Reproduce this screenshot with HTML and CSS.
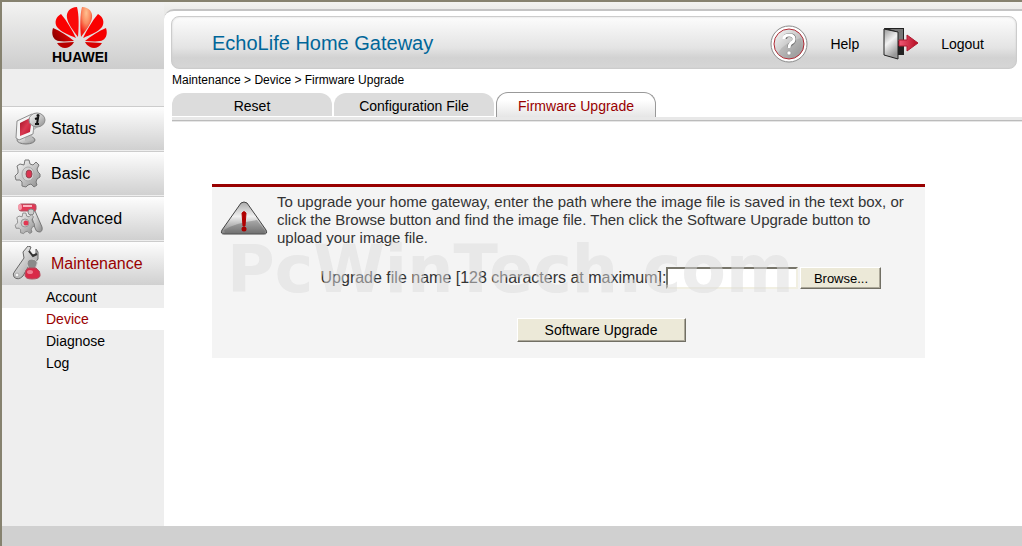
FILE: index.html
```html
<!DOCTYPE html>
<html lang="en">
<head>
    <meta charset="UTF-8">
    <meta name="viewport" content="width=device-width, initial-scale=1.0">
    <title>EchoLife Home Gateway</title>
    <link rel="stylesheet" href="styles.css">
</head>
<body>
    <div class="page">
        <aside class="sidebar">
            <div class="logo">
                <svg width="55" height="42" viewBox="0 0 55 42" aria-hidden="true">
                    <defs>
                        <radialGradient id="petal-light" cx="0.5" cy="0.2" r="0.7">
                            <stop offset="0" stop-color="#ffc090"/>
                            <stop offset="0.5" stop-color="#fb8a60"/>
                            <stop offset="1" stop-color="#f21a10"/>
                        </radialGradient>
                        <linearGradient id="petal-dark" x1="0" y1="1" x2="1" y2="0.6">
                            <stop offset="0" stop-color="#7c0000"/>
                            <stop offset="1" stop-color="#f00000"/>
                        </linearGradient>
                    </defs>
                    <path d="M26 30 C27 20 27 7 25 0 C18 0 14 5 15 11 C16 17 21 23 26 30Z" fill="#fa0a08"/>
                    <path d="M24 31 C20 23 15 14 9 7 C4 10 2 15 5 20 C9 25 17 28 24 31Z" fill="#fa0000"/>
                    <path d="M22 34 C16 29 8 24 1 21 C-1 27 1 33 7 34 C12 35 17 34 22 34Z" fill="url(#petal-dark)"/>
                    <path d="M22 35 L5 36 C8 41 13 42 17 40 C19 39 21 37 22 35Z" fill="#b80000"/>
                    <path d="M29 30 C28 20 28 7 30 0 C37 0 41 5 40 11 C39 17 34 23 29 30Z" fill="url(#petal-light)"/>
                    <path d="M31 31 C35 23 40 14 46 7 C51 10 53 15 50 20 C46 25 38 28 31 31Z" fill="#fa0000"/>
                    <path d="M33 34 C39 29 47 24 54 21 C56 27 54 33 48 34 C43 35 38 34 33 34Z" fill="#f60000"/>
                    <path d="M33 35 L50 36 C47 41 42 42 38 40 C36 39 34 37 33 35Z" fill="#d80000"/>
                </svg>
                <span class="logo-text">HUAWEI</span>
            </div>
            <nav class="nav">
                <a class="nav-item" href="#status">
                    <svg class="nav-icon" width="36" height="36" viewBox="0 0 36 36" aria-hidden="true">
                        <defs>
                            <linearGradient id="steel" x1="0" y1="0" x2="1" y2="1">
                                <stop offset="0" stop-color="#fbfbfb"/>
                                <stop offset="0.5" stop-color="#c9c9c9"/>
                                <stop offset="1" stop-color="#8b8b8b"/>
                            </linearGradient>
                            <linearGradient id="ruby" x1="0" y1="0" x2="1" y2="1">
                                <stop offset="0" stop-color="#a00c20"/>
                                <stop offset="0.5" stop-color="#d83850"/>
                                <stop offset="1" stop-color="#b80e28"/>
                            </linearGradient>
                        </defs>
                        <ellipse cx="14" cy="29" rx="9" ry="4" fill="url(#steel)" stroke="#777"/>
                        <path d="M13 24 L20 21 L20 29 L13 30Z" fill="#bbb"/>
                        <path d="M5 10 L20 3 L23 5 L21 23 L7 29 L4 27Z" fill="#f4f4f4" stroke="#8e8e8e"/>
                        <path d="M8 12 L20 6 L18 21 L8 25Z" fill="url(#ruby)"/>
                        <path d="M24 13 L21 20 L28 14Z" fill="#b5b5b5"/>
                        <ellipse cx="25" cy="9" rx="8" ry="7" fill="url(#steel)" stroke="#8c8c8c"/>
                        <path d="M23 8 L26 7 L25 13 M23 13 L27 13" fill="none" stroke="#111" stroke-width="2"/>
                        <circle cx="26" cy="4.500" r="1.500" fill="#111"/>
                    </svg>
                    Status
                </a>
                <a class="nav-item" href="#basic">
                    <svg class="nav-icon" width="36" height="36" viewBox="0 0 36 36" aria-hidden="true">
                        <path id="gear" d="M13 4 L17 4 L18 8 L21 9 L24 6 L27 9 L25 13 L26 16 L28 18 L28 21 L25 23 L24 26 L25 29 L22 31 L19 28 L16 29 L14 31 L10 30 L10 26 L8 24 L4 24 L3 20 L6 17 L6 14 L5 10 L8 8 L12 9Z" fill="url(#steel)" stroke="#777" stroke-linejoin="round"/>
                        <ellipse cx="16" cy="18" rx="6" ry="7" fill="#d2d2d2" stroke="#aaa"/>
                        <ellipse cx="17" cy="18" rx="3" ry="4" fill="#dc3450" stroke="#8f4650"/>
                    </svg>
                    Basic
                </a>
                <a class="nav-item" href="#advanced">
                    <svg class="nav-icon" width="36" height="36" viewBox="0 0 36 36" aria-hidden="true">
                        <path d="M18 10 L23 10 L30 26 Q31 31 27 31 Q24 31 23 27Z" fill="url(#steel)" stroke="#777"/>
                        <rect x="7" y="3" width="17" height="7" rx="2" fill="#e13855" stroke="#a95562"/>
                        <ellipse cx="8" cy="6" rx="2" ry="3" fill="#f69aaa"/>
                        <path d="M11 5 L20 5" stroke="#fbb4c0" stroke-width="2"/>
                        <circle cx="19" cy="11" r="3" fill="#ccc" stroke="#888"/>
                        <use href="#gear" transform="translate(1 9) scale(0.76)"/>
                        <circle cx="13" cy="22" r="4" fill="#ccc" stroke="#999"/>
                        <circle cx="14" cy="22" r="2.500" fill="#e23852"/>
                    </svg>
                    Advanced
                </a>
                <a class="nav-item nav-item-active" href="#maintenance">
                    <svg class="nav-icon" width="36" height="36" viewBox="0 0 36 36" aria-hidden="true">
                        <path d="M11 6 L16 0 L19 1 L17 6 L20 9 L24 8 L24 3 L26 6 L26 13 Q24 17 19 16 L11 30 Q6 35 2 31 Q0 28 3 25 L12 12Z" fill="url(#steel)" stroke="#666"/>
                        <path d="M17 5 L21 10 L25 8" fill="none" stroke="#333" stroke-width="2"/>
                        <circle cx="5" cy="29" r="2" fill="#f4f4f4" stroke="#aaa"/>
                        <path d="M15 18 Q15 13 20 13 Q26 14 25 18 L23 23 L17 23Z" fill="#8a8a8a" stroke="#ccc"/>
                        <path d="M16 22 L24 22 Q29 25 28 30 Q27 33 20 33 Q13 33 13 29 Q13 24 16 22Z" fill="#d92a48" stroke="#b05060"/>
                        <ellipse cx="18" cy="26" rx="3" ry="2" fill="#f07c90"/>
                    </svg>
                    Maintenance
                </a>
            </nav>
            <nav class="subnav">
                <a class="subnav-item" href="#account">Account</a>
                <a class="subnav-item subnav-item-active" href="#device">Device</a>
                <a class="subnav-item" href="#diagnose">Diagnose</a>
                <a class="subnav-item" href="#log">Log</a>
            </nav>
        </aside>

        <div class="main">
            <div class="content">
                <header class="header">
                    <h1 class="title">EchoLife Home Gateway</h1>
                    <a class="header-link" href="#help">
                        <svg width="38" height="38" viewBox="0 0 38 38" aria-hidden="true">
                            <circle cx="19" cy="19" r="18" fill="#fff" stroke="#8a8a8a"/>
                            <circle cx="19" cy="19" r="15" fill="url(#steel)" stroke="#b02a34"/>
                            <path d="M8 28 Q13 18 31 13 Q34 24 25 31 Q16 36 8 28Z" fill="#999" opacity="0.350"/>
                            <path d="M15 14 Q15 10 19 10 Q25 10 24 15 Q24 17 21 19 Q19 20 19 23" fill="none" stroke="#707070" stroke-width="4"/>
                            <path d="M14 14 Q14 10 19 10 Q24 10 24 14 Q24 17 21 18 Q19 20 19 23" fill="none" stroke="#fff" stroke-width="3"/>
                            <circle cx="19" cy="28" r="2" fill="#fff" stroke="#888" stroke-width="0.500"/>
                        </svg>
                        Help
                    </a>
                    <a class="header-link" href="#logout">
                        <svg width="36" height="34" viewBox="0 0 36 34" aria-hidden="true">
                            <defs>
                                <linearGradient id="arrow" x1="0" y1="0" x2="1" y2="0">
                                    <stop offset="0" stop-color="#f25a76"/>
                                    <stop offset="1" stop-color="#b30a20"/>
                                </linearGradient>
                                <linearGradient id="door" x1="0" y1="0" x2="0.4" y2="1">
                                    <stop offset="0" stop-color="#999"/>
                                    <stop offset="0.5" stop-color="#f2f2f2"/>
                                    <stop offset="1" stop-color="#999"/>
                                </linearGradient>
                            </defs>
                            <path d="M1 1 L21 1 L21 28 L10 28Z" fill="#222"/>
                            <path d="M6 2 L20 2 L20 14 L15 14 L15 5Z" fill="#777"/>
                            <path d="M1 2 L15 5 L15 32 L1 28Z" fill="url(#door)" stroke="#222"/>
                            <path d="M16 13 L24 13 L24 8 L35 16 L24 24 L24 19 L16 19Z" fill="url(#arrow)" stroke="#b01a30"/>
                        </svg>
                        Logout
                    </a>
                </header>
                <p class="breadcrumb">Maintenance &gt; Device &gt; Firmware Upgrade</p>
                <nav class="tabs">
                    <a class="tab" href="#reset">Reset</a>
                    <a class="tab" href="#config">Configuration File</a>
                    <a class="tab tab-active" href="#firmware">Firmware Upgrade</a>
                </nav>
                <form class="upgrade">
                    <svg class="warning" width="48" height="35" viewBox="0 0 48 35" aria-hidden="true">
                        <defs>
                            <linearGradient id="warn" x1="0" y1="0" x2="0" y2="1">
                                <stop offset="0" stop-color="#aaa"/>
                                <stop offset="0.450" stop-color="#f0f0f0"/>
                                <stop offset="1" stop-color="#7c7c7c"/>
                            </linearGradient>
                        </defs>
                        <path d="M21 2 Q24 0 27 2 L46 29 Q48 33 44 33 L4 33 Q0 33 2 29Z" fill="url(#warn)" stroke="#444"/>
                        <path d="M4 29 Q14 22 37 19 L45 30 Q46 32 43 32 L5 32Z" fill="#555" opacity="0.350"/>
                        <path d="M22 12 Q24 9 26 12 L25 25 L23 25Z" fill="#b00000" stroke="#b00000"/>
                        <circle cx="24" cy="28" r="2.500" fill="#a80000"/>
                    </svg>
                    <div class="upgrade-body">
                        <p class="upgrade-text">To upgrade your home gateway, enter the path where the image file is saved in the text box, or click the Browse button and find the image file. Then click the Software Upgrade button to upload your image file.</p>
                        <div class="file-row">
                            <label for="file-name">Upgrade file name [128 characters at maximum]:</label>
                            <input class="file-input" type="text" id="file-name" maxlength="128">
                            <button class="button browse-button" type="button">Browse...</button>
                        </div>
                        <button class="button upgrade-button" type="submit">Software Upgrade</button>
                    </div>
                    <span class="watermark">PcWinTech.com</span>
                </form>
            </div>
        </div>
    </div>
    <footer class="footer"></footer>
</body>
</html>
```
FILE: styles.css
```css
* {
    box-sizing: border-box;
}
body {
    font-family: "Liberation Sans", Arial, sans-serif;
    font-size: 14px;
    margin: 0;
    color: #000;
    background: #fff;
    border-top: 2px solid #86826f;
    border-left: 2px solid #86826f;
    display: flex;
    flex-direction: column;
    min-height: 100vh;
}
a {
    color: inherit;
    text-decoration: none;
}
.page {
    display: flex;
    flex: 1;
}
.sidebar {
    width: 162px;
    flex-shrink: 0;
    background: #eee;
}
.logo {
    height: 67px;
    padding: 5px 0 0 50px;
    display: flex;
    flex-direction: column;
    align-items: flex-start;
    background: linear-gradient(#f3f3f2, #cdcdcd);
}
.logo-text {
    font-size: 14px;
    font-weight: bold;
    line-height: 16px;
}
.nav {
    margin-top: 37px;
}
.nav-item {
    height: 45px;
    padding-left: 10px;
    display: flex;
    align-items: center;
    gap: 3px;
    font-size: 16px;
    border-top: 1px solid #ccc;
    border-bottom: 1px solid #eee;
    background: linear-gradient(#fdfdfd, #d0d0d0);
}
.nav-item-active {
    color: #990000;
}
.subnav-item {
    display: block;
    padding-left: 44px;
    line-height: 22px;
}
.subnav-item-active {
    color: #990000;
    background: #fff;
}
.main {
    flex: 1;
    padding-top: 7px;
    background: linear-gradient(#f3f3f0, #ebebe9 8px, #cdcdcd 67px, #eee 67px);
}
.content {
    height: 100%;
    padding: 5px 0 0 7px;
    background: #fff;
    border-top: 2px solid #c4c4c4;
    border-top-left-radius: 10px;
}
.header {
    height: 53px;
    margin-right: 5px;
    padding: 2px 32px 0 40px;
    display: flex;
    align-items: center;
    border: 1px solid #ccc;
    border-radius: 8px;
    box-shadow: inset 0 0 2px #ccc;
    background: linear-gradient(#fcfcfc, #e4e4e4 60%, #d2d2d2 80%, #d6d6d6);
}
.title {
    margin: 0 auto 0 0;
    font-size: 20px;
    font-weight: normal;
    color: #006699;
}
.header-link {
    display: flex;
    align-items: center;
    gap: 22px;
    margin-left: 24px;
}
.breadcrumb {
    margin: 4px 0 4px 1px;
    font-size: 12px;
    line-height: 15px;
}
.tabs {
    margin-left: 1px;
    display: flex;
    align-items: flex-end;
    gap: 2px;
    height: 30px;
    padding-bottom: 5px;
    background: linear-gradient(#e8e8e8, #e8e8e8 3px, #bbb 3px, #bbb 4px, #e6e6e6 4px) bottom / 100% 5px no-repeat;
}
.tab {
    width: 160px;
    height: 24px;
    line-height: 27px;
    text-align: center;
    background: #dcdcdc;
    border-bottom: 1px solid #fff;
    border-radius: 12px 12px 0 0;
}
.tab-active {
    height: 25px;
    color: #990000;
    border: 1px solid #999;
    border-bottom: 0;
    background: linear-gradient(#fff 30%, #e6e6e6);
}
.upgrade {
    position: relative;
    margin: 62px 97px 0 41px;
    padding: 6px 0 16px 8px;
    display: flex;
    gap: 9px;
    color: #333;
    background: #f4f4f4;
    border-top: 3px solid #990000;
}
.warning {
    flex-shrink: 0;
    margin-top: 8px;
}
.upgrade-body {
    flex: 1;
    display: flex;
    flex-direction: column;
    align-items: center;
    font-size: 16px;
}
.upgrade-text {
    margin: 0 0 20px;
    padding-right: 12px;
    font-size: 15px;
    line-height: 18px;
}
.file-row {
    display: flex;
    align-items: center;
    margin-bottom: 29px;
}
.file-input {
    width: 132px;
    height: 22px;
    padding: 0 2px;
    margin-right: 2px;
    font-family: inherit;
    font-size: 14px;
    background: #fff;
    border: 2px solid;
    border-color: #77756a #f1efe2 #f1efe2 #77756a;
}
.button {
    font-family: inherit;
    color: #000;
    background: #ece9d8;
    border: 1px solid;
    border-color: #fff #716f64 #716f64 #fff;
    box-shadow: inset -1px -1px #aca899;
}
.browse-button {
    width: 81px;
    height: 22px;
    padding: 0;
    font-size: 13px;
}
.upgrade-button {
    width: 169px;
    height: 24px;
    padding: 0;
    font-size: 14px;
}
.watermark {
    position: absolute;
    left: 15px;
    top: 45px;
    font-family: "DejaVu Sans", Verdana, sans-serif;
    font-size: 65px;
    font-weight: bold;
    line-height: 76px;
    color: rgba(220, 220, 220, 0.5);
    pointer-events: none;
}
.footer {
    height: 20px;
    background: #d0d0d0;
}
```
